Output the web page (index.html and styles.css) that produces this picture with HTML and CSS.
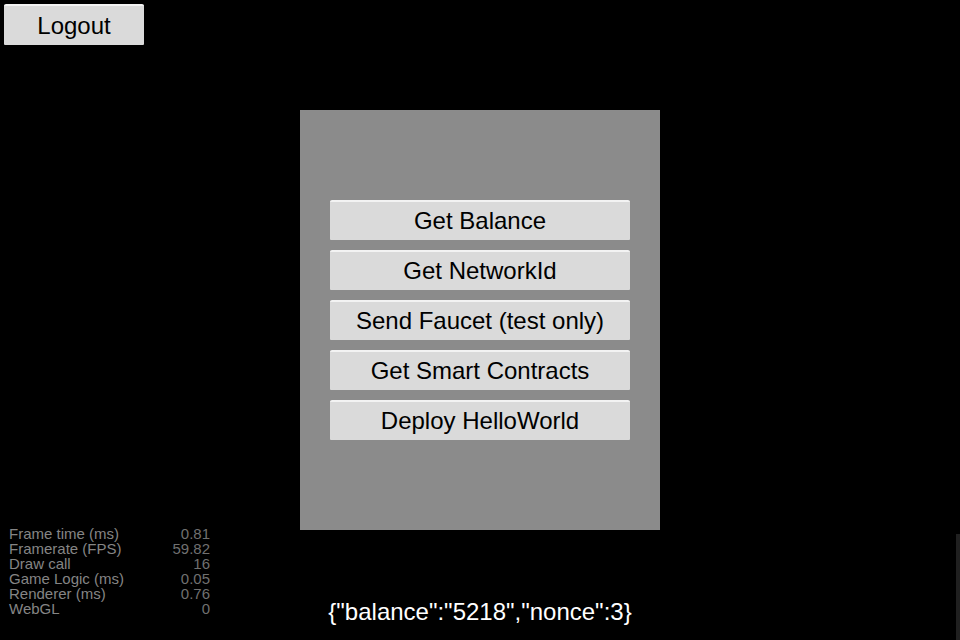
FILE: index.html
```html
<!DOCTYPE html>
<html lang="en">
<head>
<meta charset="utf-8">
<title>Wallet</title>
<link rel="stylesheet" href="styles.css">
</head>
<body>
<div class="stage">
  <button class="btn logout" type="button">Logout</button>
  <main class="panel">
    <button class="btn" type="button">Get Balance</button>
    <button class="btn" type="button">Get NetworkId</button>
    <button class="btn" type="button">Send Faucet (test only)</button>
    <button class="btn" type="button">Get Smart Contracts</button>
    <button class="btn" type="button">Deploy HelloWorld</button>
  </main>
  <table class="stats">
    <tbody>
      <tr><th scope="row">Frame time (ms)</th><td>0.81</td></tr>
      <tr><th scope="row">Framerate (FPS)</th><td>59.82</td></tr>
      <tr><th scope="row">Draw call</th><td>16</td></tr>
      <tr><th scope="row">Game Logic (ms)</th><td>0.05</td></tr>
      <tr><th scope="row">Renderer (ms)</th><td>0.76</td></tr>
      <tr><th scope="row">WebGL</th><td>0</td></tr>
    </tbody>
  </table>
  <output class="result">{"balance":"5218","nonce":3}</output>
  <div class="edge"></div>
</div>
</body>
</html>
```
FILE: styles.css
```css
* {
  box-sizing: border-box;
}

body {
  margin: 0;
  background: #000;
  font-family: "Liberation Sans", Arial, sans-serif;
}

/* Every layer shares one grid cell and is aligned inside it. */
.stage {
  display: grid;
  grid-template-areas: "scene";
  min-height: 100vh;
}

.stage > * {
  grid-area: scene;
}

.btn {
  height: 40px;
  padding: 0 0 1px;
  border: 0;
  border-top: 2px solid #f3f3f3;
  border-radius: 2px 2px 1px 1px;
  background: #dadada;
  color: #000;
  font-family: inherit;
  font-size: 24px;
  line-height: 32px;
}

.logout {
  place-self: start;
  width: 140px;
  height: 41px;
  margin: 4px;
  padding: 0;
}

.panel {
  place-self: center;
  display: flex;
  flex-direction: column;
  gap: 10px;
  width: 360px;
  padding: 90px 30px;
  background: #8b8b8b;
}

.stats {
  place-self: end start;
  width: 201px;
  margin: 0 0 24px 9px;
  border-collapse: collapse;
  color: #858585;
  font-size: 15px;
  line-height: 15px;
}

.stats th,
.stats td {
  padding: 0;
  font-weight: normal;
  text-align: left;
}

.stats td {
  color: #707070;
  text-align: right;
}

.result {
  place-self: end center;
  margin-bottom: 12px;
  color: #fff;
  font-size: 24px;
  line-height: 32px;
}

.edge {
  place-self: end;
  width: 4px;
  height: 106px;
  background: #202020;
}
```
